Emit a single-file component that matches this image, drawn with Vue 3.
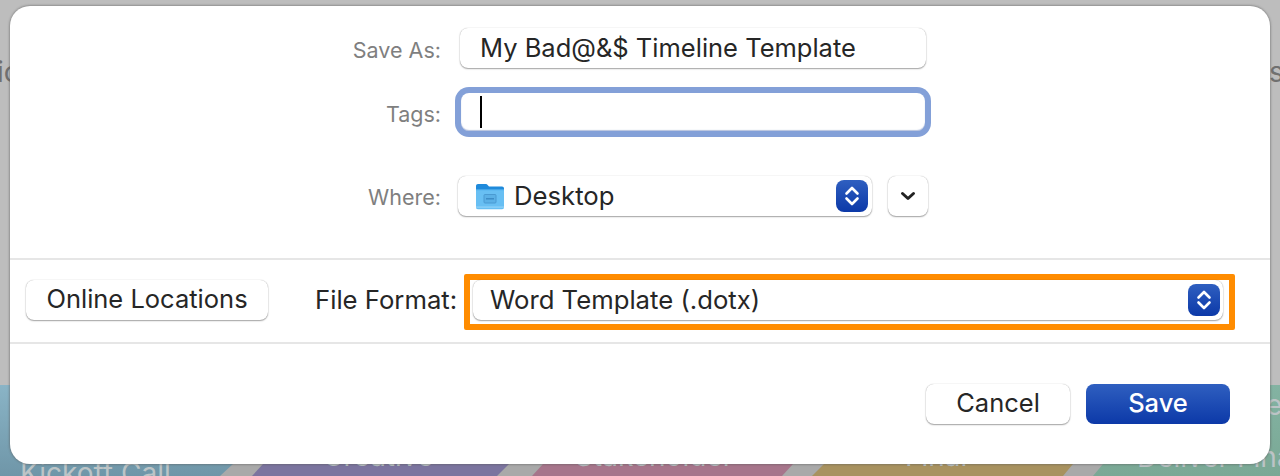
<script setup>
const stages = [
  { name: 'Kickoff Call', x: 20, y: 98, color: 'url(#teal)', points: '0,0 340,0 233,79 220,91 0,91' },
  { name: 'Creative', x: 323, y: 81, color: '#7b749f', points: '263,79 252,91 497,91 509,79' },
  { name: 'Stakeholder', x: 575, y: 81, color: '#a7758b', points: '543,79 532,91 782,91 793,79' },
  { name: 'Final', x: 905, y: 81, color: '#a8925f', points: '824,79 812,91 1063,91 1073,79' },
  { name: 'Deliver Final', x: 1137, y: 82, color: 'url(#green)', points: '1103,79 1093,91 1280,91 1280,0 1103,0' }
]
</script>

<template>
  <div class="page">
    <span class="peek peek-left">ic</span>
    <span class="peek peek-right">s</span>

    <svg class="strip" width="1280" height="91" viewBox="0 0 1280 91">
      <defs>
        <linearGradient id="teal" x1="0" y1="0" x2="0" y2="1">
          <stop offset="0" stop-color="#8ab4c6" />
          <stop offset="1" stop-color="#6f96a8" />
        </linearGradient>
        <linearGradient id="green" x1="0" y1="0" x2="0" y2="1">
          <stop offset="0" stop-color="#83b3a2" />
          <stop offset="1" stop-color="#7aa895" />
        </linearGradient>
      </defs>
      <rect width="1280" height="91" fill="#a9a9a9" />
      <polygon v-for="stage in stages" :key="stage.name" :points="stage.points" :fill="stage.color" />
      <text v-for="stage in stages" :key="stage.x" class="strip-label" :x="stage.x" :y="stage.y">{{ stage.name }}</text>
      <text class="strip-label" x="1266" y="30">e</text>
    </svg>

    <div class="dialog">
      <section class="top">
        <div class="row row-save">
          <label class="label">Save As:</label>
          <div class="field">My Bad@&amp;$ Timeline Template</div>
        </div>
        <div class="row row-tags">
          <label class="label">Tags:</label>
          <div class="field field-focus"><i class="caret"></i></div>
        </div>
        <div class="row row-where">
          <label class="label">Where:</label>
          <div class="popup popup-where">
            <svg class="folder" width="30" height="28" viewBox="0 0 30 28">
              <path d="M1 4C1 2.800 1.800 2 3 2h7.500c1 0 1.500.4 2.100 1L14 4.500h13c1.200 0 2 .8 2 2V10H1z" fill="#1f8adb" />
              <path d="M1 7.500h28v18c0 1-.8 1.700-1.800 1.700H2.800c-1 0-1.800-.7-1.800-1.700z" fill="#68bff3" />
              <path d="M1 7h28v1.200H1z" fill="#45a6e8" />
              <rect x="9" y="12.500" width="12" height="8.500" rx="1" fill="#5bb0e6" stroke="#4a9ad2" />
              <rect x="11" y="16" width="8" height="1.500" fill="#3d8cc6" />
              <path d="M1 24.500h28v1.200H1z" fill="#93d3f8" />
            </svg>
            <span class="popup-text">Desktop</span>
            <span class="stepper">
              <svg width="16" height="24" viewBox="0 0 16 24" fill="none" stroke="#fff" stroke-width="2.600" stroke-linecap="round" stroke-linejoin="round">
                <path d="M2.500 9.500L8 4l5.500 5.500M2.500 14.500L8 20l5.500-5.500" />
              </svg>
            </span>
          </div>
          <button class="disclosure">
            <svg width="16" height="10" viewBox="0 0 16 10" fill="none" stroke="#222" stroke-width="3" stroke-linecap="round" stroke-linejoin="round">
              <path d="M2.500 2.500L8 7.500l5.500-5" />
            </svg>
          </button>
        </div>
      </section>

      <section class="middle">
        <button class="btn btn-online">Online Locations</button>
        <label class="format-label">File Format:</label>
        <div class="highlight">
          <div class="popup popup-format">
            <span class="popup-text">Word Template (.dotx)</span>
            <span class="stepper">
              <svg width="16" height="24" viewBox="0 0 16 24" fill="none" stroke="#fff" stroke-width="2.600" stroke-linecap="round" stroke-linejoin="round">
                <path d="M2.500 9.500L8 4l5.500 5.500M2.500 14.500L8 20l5.500-5.500" />
              </svg>
            </span>
          </div>
        </div>
      </section>

      <section class="footer">
        <button class="btn btn-cancel">Cancel</button>
        <button class="btn btn-save">Save</button>
      </section>
    </div>
  </div>
</template>

<style>
html, body {
  margin: 0;
  background: #bdbdbd;
}
</style>

<style scoped>
.page {
  position: relative;
  width: 1280px;
  height: 476px;
  overflow: hidden;
  background: #bdbdbd;
  font-family: Inter, "Liberation Sans", sans-serif;
  color: #262626;
  padding: 6px 10px 12px;
  box-sizing: border-box;
}

.peek {
  position: absolute;
  top: 56px;
  font-size: 28px;
  line-height: 32px;
  color: #707070;
}

.peek-left {
  left: -3px;
}

.peek-right {
  left: 1269px;
}

.strip {
  position: absolute;
  left: 0;
  top: 385px;
}

.strip-label {
  font-size: 28px;
  fill: #bcc4c6;
  font-family: Inter, "Liberation Sans", sans-serif;
}

.dialog {
  position: relative;
  height: 458px;
  background: #fff;
  border-radius: 20px;
  box-shadow: 0 0 2px 1px rgba(90, 90, 90, 0.45);
  display: flex;
  flex-direction: column;
}

.top {
  height: 254px;
  box-sizing: border-box;
  padding-top: 22px;
  border-bottom: 2px solid #e6e6e6;
}

.row {
  display: flex;
  align-items: center;
}

.row-tags {
  margin-top: 25px;
}

.row-where {
  margin-top: 45px;
}

.label {
  width: 431px;
  margin-right: 19px;
  padding-top: 4px;
  text-align: right;
  font-size: 21.500px;
  color: #7f7f7f;
}

.row-where .label {
  margin-right: 17px;
  padding-top: 1px;
}

.field {
  width: 466px;
  height: 40px;
  box-sizing: border-box;
  padding-left: 20px;
  font-size: 25.500px;
  line-height: 40px;
  background: #fff;
  border-radius: 8px;
  box-shadow: 0 0 1px rgba(0, 0, 0, 0.3), 0 1px 1.500px rgba(0, 0, 0, 0.35);
}

.field-focus {
  width: 464px;
  height: 38px;
  margin-left: 1px;
  padding-left: 19px;
  display: flex;
  align-items: center;
  box-shadow: 0 0 0 6px #83a0d8, inset 0 -1px 1px rgba(70, 100, 170, 0.4);
}

.caret {
  display: block;
  width: 2px;
  height: 32px;
  background: #000;
}

.popup {
  height: 40px;
  display: flex;
  align-items: center;
  background: #fff;
  border-radius: 8px;
  box-shadow: 0 0 1px rgba(0, 0, 0, 0.3), 0 1px 1.500px rgba(0, 0, 0, 0.35);
}

.popup-where {
  width: 414px;
  padding-left: 17px;
  padding-right: 4px;
  box-sizing: border-box;
}

.folder {
  margin-right: 9px;
}

.popup-text {
  font-size: 25.700px;
  flex: 1;
  padding-bottom: 2px;
}

.stepper {
  width: 32px;
  height: 32px;
  border-radius: 8px;
  background: linear-gradient(#2f5fc0, #0c39a8);
  display: flex;
  align-items: center;
  justify-content: center;
}

.disclosure {
  width: 40px;
  height: 40px;
  margin-left: 16px;
  padding: 0;
  border: none;
  background: #fff;
  border-radius: 8px;
  display: flex;
  align-items: center;
  justify-content: center;
  box-shadow: 0 0 1px rgba(0, 0, 0, 0.3), 0 1px 1.500px rgba(0, 0, 0, 0.35);
}

.middle {
  height: 84px;
  box-sizing: border-box;
  border-bottom: 2px solid #e6e6e6;
  padding-left: 16px;
  padding-bottom: 3px;
  display: flex;
  align-items: center;
}

.btn {
  height: 40px;
  padding: 0 0 2px;
  border: none;
  border-radius: 8px;
  background: #fff;
  font-family: inherit;
  font-size: 25.500px;
  color: #262626;
  box-shadow: 0 0 1px rgba(0, 0, 0, 0.3), 0 1px 1.500px rgba(0, 0, 0, 0.35);
}

.btn-online {
  width: 242px;
}

.format-label {
  width: 141px;
  margin-left: 47px;
  font-size: 25.700px;
  white-space: nowrap;
}

.highlight {
  width: 771px;
  height: 56px;
  margin-left: 8px;
  margin-top: 5px;
  box-sizing: border-box;
  border: 6px solid #ff8c00;
  border-radius: 2px;
  padding-left: 3px;
}

.popup-format {
  width: 750px;
  height: 40px;
  padding-left: 17px;
  padding-right: 3px;
  box-sizing: border-box;
}

.footer {
  flex: 1;
  display: flex;
  justify-content: flex-end;
  gap: 16px;
  padding: 40px 40px 0 0;
}

.btn-cancel,
.btn-save {
  width: 144px;
  padding-bottom: 4px;
}

.btn-save {
  background: linear-gradient(#2f5fc0, #0c39a8);
  color: #fff;
  font-weight: 500;
  box-shadow: none;
}
</style>
